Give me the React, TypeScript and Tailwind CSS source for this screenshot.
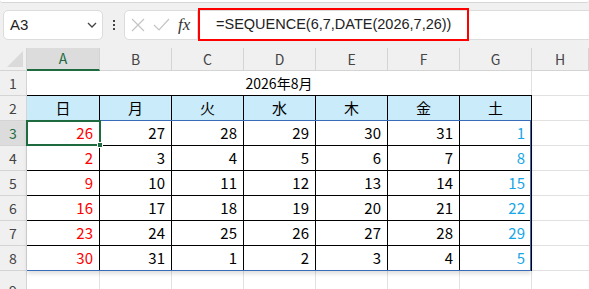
import React from 'react';

const cols = ['A', 'B', 'C', 'D', 'E', 'F', 'G', 'H'];
const days = ['日', '月', '火', '水', '木', '金', '土'];

// dates from SEQUENCE(6,7,DATE(2026,7,26))
const rows: number[][] = Array.from({ length: 6 }, (_, r) =>
  Array.from({ length: 7 }, (_, c) => new Date(2026, 6, 26 + r * 7 + c).getDate())
);

const font = { fontFamily: '"Noto Sans CJK JP", "Noto Sans", sans-serif' };

function ColHeader({ label, active }: { label: string; active?: boolean }) {
  return (
    <div
      className={`flex items-center justify-center border-r border-b border-[#d4d4d4] text-[14px] ${
        active ? 'bg-[#dcdcdc] text-[#1e6b3f] border-b-2 border-b-[#1e6b3f]' : 'bg-[#f0f0f0] text-[#444]'
      }`}
    >
      {label}
    </div>
  );
}

function RowHeader({ n, active }: { n: number; active?: boolean }) {
  return (
    <div
      className={`flex items-center justify-center border-r border-b border-[#d4d4d4] text-[14px] ${
        active ? 'bg-[#dcdcdc] text-[#1e6b3f]' : 'bg-[#f0f0f0] text-[#444]'
      }`}
    >
      {n}
    </div>
  );
}

export default function App() {
  return (
    <div className="w-[589px] h-[289px] overflow-hidden bg-[#f0f0f0] relative" style={font}>
      {/* ribbon edge */}
      <div className="h-[3px] bg-white rounded-b-[4px] border-b border-[#d6d6d6]" />

      {/* formula bar */}
      <div className="flex items-center h-[30px] mt-[7px] pl-[3px]" style={{ fontFamily: '"Liberation Sans", sans-serif' }}>
        <div className="w-[100px] h-[30px] bg-white border border-[#dcdcdc] rounded-[5px] flex items-center justify-between pl-[6px] pr-[4px] text-[15px] text-[#222]">
          <span>A3</span>
          <svg width="12" height="12" viewBox="0 0 12 12" className="text-[#444]">
            <path d="M2 4 L6 8 L10 4" fill="none" stroke="currentColor" strokeWidth="1.3" />
          </svg>
        </div>
        <div className="w-[21px] flex flex-col items-center gap-[2px]">
          <div className="w-[2px] h-[2px] bg-[#444]" />
          <div className="w-[2px] h-[2px] bg-[#444]" />
          <div className="w-[2px] h-[2px] bg-[#444]" />
        </div>
        <div className="w-[74px] h-[30px] bg-white border border-[#dcdcdc] rounded-l-[5px] flex items-center pl-[6px] gap-[8px]">
          <svg width="14" height="14" viewBox="0 0 14 14">
            <path d="M1 1 L13 13 M13 1 L1 13" stroke="#c4c4c4" strokeWidth="1.2" />
          </svg>
          <svg width="17" height="14" viewBox="0 0 17 14">
            <path d="M1 7 L6 12 L16 1" fill="none" stroke="#c4c4c4" strokeWidth="1.2" />
          </svg>
          <span className="text-[17px] italic text-[#333]" style={{ fontFamily: '"Liberation Serif", serif' }}>
            fx
          </span>
        </div>
        <div className="flex-1 h-[30px] bg-white border-y border-[#dcdcdc] relative flex items-center pl-[18px] text-[14.5px] text-[#222]">
          =SEQUENCE(6,7,DATE(2026,7,26))
          <div className="absolute left-0 top-[-3px] w-[271px] h-[33px] border-2 border-[#ff0000]" />
        </div>
      </div>

      {/* sheet */}
      <div className="mt-[8px] grid grid-cols-[27px_73px_72px_72px_72px_72px_72px_72px_1fr] grid-rows-[23px_25px_25px_25px_25px_25px_25px_25px_25px_40px] bg-white relative">
        {/* corner */}
        <div className="bg-[#f0f0f0] border-r border-b border-[#d4d4d4] relative overflow-hidden">
          <div className="absolute right-[3px] bottom-[3px] w-0 h-0 border-l-[16px] border-l-transparent border-b-[16px] border-b-[#dadada]" />
        </div>
        {cols.map((c) => (
          <ColHeader key={c} label={c} active={c === 'A'} />
        ))}

        {/* row 1 */}
        <RowHeader n={1} />
        <div className="col-span-7 border-r border-b border-[#e1e1e1] flex items-center justify-center text-[14px] text-black">
          2026年8月
        </div>
        <div className="border-b border-[#e1e1e1]" />

        {/* row 2 */}
        <RowHeader n={2} />
        {days.map((d) => (
          <div
            key={d}
            className="bg-[#caebf9] border-t border-r border-b border-black flex items-center justify-center text-[15px] text-black -mt-px"
          >
            {d}
          </div>
        ))}
        <div className="border-b border-[#e1e1e1]" />

        {/* rows 3-8 */}
        {rows.map((r, ri) => (
          <React.Fragment key={ri}>
            <RowHeader n={ri + 3} active={ri === 0} />
            {r.map((v, ci) => (
              <div
                key={ci}
                className={`border-r border-b border-black flex items-center justify-end pr-[6px] text-[15px] ${
                  ci === 0 ? 'text-[#ff0000]' : ci === 6 ? 'text-[#16a6e6]' : 'text-black'
                }`}
              >
                {v}
              </div>
            ))}
            <div className="border-b border-[#e1e1e1]" />
          </React.Fragment>
        ))}

        {/* row 9 */}
        <RowHeader n={9} />
        {cols.map((c) => (
          <div key={c} className={`border-b border-[#e1e1e1] ${c === 'H' ? '' : 'border-r'}`} />
        ))}

        {/* spill range outline */}
        <div className="absolute left-[27px] top-[72px] w-[504px] h-[151px] border-t border-r border-b border-[#3a6bb8] shadow-[0_3px_4px_rgba(0,0,0,0.12)] pointer-events-none" />
        {/* active cell */}
        <div className="absolute left-[26px] top-[72px] w-[75px] h-[26px] border-2 border-[#1e6b3f] pointer-events-none">
          <div className="absolute right-[-4px] bottom-[-4px] w-[6px] h-[6px] bg-[#1e6b3f] border border-white" />
        </div>
      </div>
    </div>
  );
}
